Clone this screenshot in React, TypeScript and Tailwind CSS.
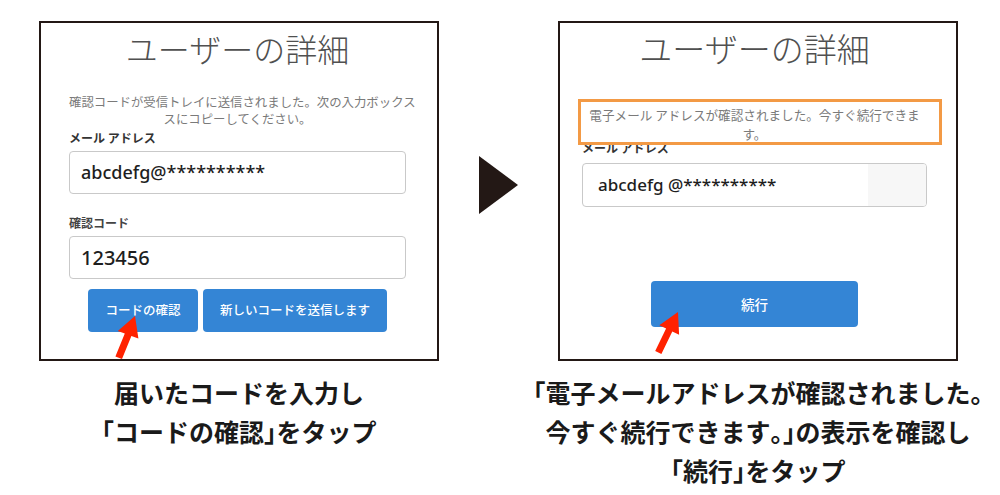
const jp = "font-['Noto_Sans_CJK_JP','Noto_Sans',sans-serif]";
const latin = "font-['Noto_Sans','Noto_Sans_CJK_JP',sans-serif]";

// half-width punctuation in captions
function H({ children }: { children: string }) {
  return <span className="[font-feature-settings:'halt']">{children}</span>;
}

function LeftPanel() {
  return (
    <div className="w-[400px] h-[340px] border-2 border-[#231815] bg-white flex flex-col pl-[28px] pr-[31px]">
      <h1 className="mt-[6px] text-center text-[32px] leading-[38px] font-light text-[#505050]">
        ユーザーの詳細
      </h1>
      <p className="mt-[27px] text-center text-[12.4px] leading-[17px] text-[#7a7a7a] whitespace-nowrap">
        確認コードが受信トレイに送信されました。次の入力ボックス
        <br />
        スにコピーしてください。
      </p>
      <div className="mt-[1px] text-[12px] leading-[17px] font-bold text-[#333]">メール アドレス</div>
      <div className="mt-[5px] h-[43px] border border-[#c9c9c9] rounded-[4px] flex items-center pl-[11px]">
        <span className={`${latin} text-[18px] font-medium text-[#1e1e1e]`}>abcdefg@**********</span>
      </div>
      <div className="mt-[20px] text-[12px] leading-[17px] font-bold text-[#444]">確認コード</div>
      <div className="mt-[5px] h-[43px] border border-[#c9c9c9] rounded-[4px] flex items-center pl-[11px]">
        <span className={`${latin} text-[20px] font-medium text-[#1e1e1e]`}>123456</span>
      </div>
      <div className="mt-[10px] flex justify-center gap-[5px]">
        <button className="w-[110px] h-[43px] rounded-[4px] bg-[#3485d5] text-white text-[12.5px] font-medium">
          コードの確認
        </button>
        <button className="w-[184px] h-[43px] rounded-[4px] bg-[#3485d5] text-white text-[12.5px] font-medium">
          新しいコードを送信します
        </button>
      </div>
    </div>
  );
}

function RightPanel() {
  return (
    <div className="relative w-[400px] h-[340px] border-2 border-[#231815] bg-white flex flex-col pl-[22px] pr-[29px]">
      <h1 className="mt-[6px] text-center text-[33px] leading-[38px] font-light text-[#505050]">
        ユーザーの詳細
      </h1>
      <p className="mt-[38px] text-center text-[12.6px] leading-[19px] text-[#7a7a7a] whitespace-nowrap">
        電子メール アドレスが確認されました。今すぐ続行できま
        <br />
        す。
      </p>
      <div className="mt-[-4px] text-[12px] leading-[17px] font-bold text-[#333]">メール アドレス</div>
      <div className="mt-[7px] h-[44px] border border-[#c9c9c9] rounded-[4px] flex items-center overflow-hidden">
        <span className={`${latin} flex-1 pl-[15px] text-[17px] font-medium text-[#1e1e1e]`}>abcdefg @**********</span>
        <div className="w-[58px] h-full bg-[#f7f7f7]" />
      </div>
      <button className="mt-[74px] mx-auto w-[207px] h-[46px] rounded-[4px] bg-[#3485d5] text-white text-[13.5px] font-medium">
        続行
      </button>
      {/* highlight box */}
      <div className="absolute left-[18px] top-[76px] w-[364px] h-[46px] border-[3px] border-[#f39a45]" />
    </div>
  );
}

export default function App() {
  return (
    <div className={`${jp} relative w-[1000px] h-[495px] bg-white overflow-hidden`}>
      <div className="flex items-start pt-[21px] pl-[39px]">
        <div className="w-[400px] flex flex-col">
          <LeftPanel />
          <div className="mt-[12px] self-center w-max text-center text-[25px] leading-[39px] font-bold text-[#1a1a1a] whitespace-nowrap">
            届いたコードを入力し
            <br />
            <H>「</H>コードの確認<H>」</H>をタップ
          </div>
        </div>
        <div className="w-[119px] flex justify-center pt-[135px]">
          <svg width="39" height="58" viewBox="0 0 39 58">
            <polygon points="0,0 39,29 0,58" fill="#231815" />
          </svg>
        </div>
        <div className="w-[400px] flex flex-col">
          <RightPanel />
          <div className="mt-[12px] self-center w-max text-center text-[25px] leading-[39px] font-bold text-[#1a1a1a] whitespace-nowrap">
            <H>「</H>電子メールアドレスが確認されました<H>。</H>
            <br />
            今すぐ続行できます<H>。」</H>の表示を確認し
            <br />
            <H>「</H>続行<H>」</H>をタップ
          </div>
        </div>
      </div>
      {/* tap arrows */}
      <svg className="absolute inset-0 pointer-events-none" width="1000" height="495">
        <polygon
          points="135,316 138.4,338.6 131.4,336 122,359 115.4,356.6 124.8,333.6 117.8,331"
          fill="#ff2200"
        />
        <polygon
          points="678,312 679.1,334.8 672.3,331.5 661.4,354 655.2,351 666.1,328.5 659.3,325.2"
          fill="#ff2200"
        />
      </svg>
    </div>
  );
}
